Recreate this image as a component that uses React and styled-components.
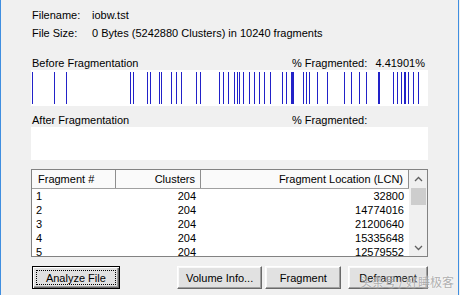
import React from "react";
import styled, { createGlobalStyle } from "styled-components";

const GlobalStyle = createGlobalStyle`
  html, body {
    margin: 0;
    padding: 0;
    background: #f0f0f0;
  }
  body {
    font-family: "Liberation Sans", Arial, sans-serif;
    font-size: 11px;
    color: #000;
  }
`;

// fragment map lines: [x from bar left, width]
const BEFORE = [
  [1, 1], [23, 1], [35, 1], [99, 1], [102, 1], [116, 1], [119, 1], [128, 1],
  [130, 1], [140, 1], [145, 1], [150, 1], [165, 1], [169, 1], [188, 1],
  [192, 1], [197, 1], [203, 1], [206, 1], [208, 1], [212, 1], [218, 1],
  [223, 1], [228, 1], [233, 1], [239, 1], [251, 1], [255, 1], [260, 3],
  [272, 1], [275, 1], [278, 1], [286, 1], [296, 1], [313, 1], [320, 1],
  [328, 1], [335, 1], [347, 2], [362, 1], [366, 1], [370, 1], [373, 2],
  [377, 1], [382, 1], [387, 1],
];

const ROWS = [
  [1, 204, 32800],
  [2, 204, 14774016],
  [3, 204, 21200640],
  [4, 204, 15335648],
  [5, 204, 12579552],
];

const Window = styled.div`
  position: relative;
  box-sizing: border-box;
  width: 459px;
  height: 295px;
  border-left: 1px solid #3f8ee0;
  border-right: 1px solid #3f8ee0;
  padding: 6px 30px 0 30px;
  overflow: hidden;
`;

const InfoRow = styled.div`
  display: flex;
  height: 18px;
  line-height: 18px;
  padding-left: 1px;
`;

const InfoLabel = styled.span`
  width: 60px;
`;

const SectionHead = styled.div`
  display: flex;
  height: 14px;
  line-height: 14px;
  margin-top: ${(p) => p.$gap}px;
  padding-left: 1px;
`;

const SectionTitle = styled.span`
  flex: 1;
`;

const FragStat = styled.span`
  display: flex;
  justify-content: space-between;
  width: 133px;
  padding-right: 3px;
`;

const MapBox = styled.div`
  background: #fff;
  height: ${(p) => p.$h}px;
`;

const ListBox = styled.div`
  display: flex;
  margin-top: 9px;
  height: 88px;
  box-sizing: border-box;
  border: 1px solid #828282;
  background: #fff;
`;

const ListBody = styled.div`
  flex: 1;
  overflow: hidden;
`;

const HeaderRow = styled.div`
  display: grid;
  grid-template-columns: 84px 85px 1fr;
  height: 18px;
  border-bottom: 1px solid #a0a0a0;
  background: #fafafa;
`;

const HeadCell = styled.div`
  padding: 3px 5px 0 6px;
  text-align: ${(p) => p.$align || "left"};
  border-right: 1px solid #8e8e8e;
  white-space: nowrap;
`;

const DataRow = styled.div`
  display: grid;
  grid-template-columns: 84px 85px 1fr;
  height: 14px;
  line-height: 14px;
`;

const Cell = styled.div`
  padding: 0 5px 0 4px;
  text-align: ${(p) => p.$align || "left"};
`;

const ScrollBar = styled.div`
  display: flex;
  flex-direction: column;
  width: 17px;
  background: #f0f0f0;
  border-left: 1px solid #f0f0f0;
`;

const Arrow = styled.div`
  height: 17px;
  display: flex;
  align-items: center;
  justify-content: center;
  color: #606060;
`;

const Thumb = styled.div`
  margin: 1px 1px 0 1px;
  height: 17px;
  background: #cdcdcd;
`;

const Track = styled.div`
  flex: 1;
`;

const ButtonRow = styled.div`
  display: flex;
  margin-top: 9px;
  padding-left: 1px;
`;

const Button = styled.div`
  box-sizing: border-box;
  width: ${(p) => p.$w}px;
  height: 23px;
  margin-left: ${(p) => p.$ml || 0}px;
  display: flex;
  align-items: center;
  justify-content: center;
  background: #e1e1e1;
  border: 1px solid;
  border-color: #fff #696969 #696969 #fff;
  box-shadow: inset -1px -1px 0 #a0a0a0, inset 1px 1px 0 #f8f8f8;
  ${(p) =>
    p.$default &&
    `
    border: 1px solid #000;
    box-shadow: inset 1px 1px 0 #fff, inset -1px -1px 0 #696969, inset -2px -2px 0 #a0a0a0;
  `}
`;

const FocusRect = styled.span`
  display: flex;
  align-items: center;
  justify-content: center;
  width: calc(100% - 8px);
  height: calc(100% - 8px);
  outline: 1px dotted #000;
`;

const Watermark = styled.div`
  position: absolute;
  right: 4px;
  bottom: 5px;
  font-family: "Noto Sans CJK SC", sans-serif;
  font-size: 12px;
  color: rgba(150, 150, 150, 0.75);
  text-shadow: 0 0 2px #fff;
`;

const FragMap = ({ lines }) => (
  <svg width="397" height="36" style={{ display: "block" }}>
    {lines.map(([x, w], i) => (
      <rect key={i} x={x} y={2} width={w} height={32} fill="#2222c8" />
    ))}
  </svg>
);

const Chevron = ({ up }) => (
  <svg width="9" height="6" viewBox="0 0 9 6">
    <path
      d={up ? "M1 5 L4.5 1.5 L8 5" : "M1 1 L4.5 4.5 L8 1"}
      fill="none"
      stroke="#606060"
      strokeWidth="1.3"
    />
  </svg>
);

export default function App() {
  return (
    <>
      <GlobalStyle />
      <Window>
        <InfoRow>
          <InfoLabel>Filename:</InfoLabel>
          <span>iobw.tst</span>
        </InfoRow>
        <InfoRow>
          <InfoLabel>File Size:</InfoLabel>
          <span>0 Bytes (5242880 Clusters) in 10240 fragments</span>
        </InfoRow>

        <SectionHead $gap={14}>
          <SectionTitle>Before Fragmentation</SectionTitle>
          <FragStat>
            <span>% Fragmented:</span>
            <span>4.41901%</span>
          </FragStat>
        </SectionHead>
        <MapBox $h={36}>
          <FragMap lines={BEFORE} />
        </MapBox>

        <SectionHead $gap={7}>
          <SectionTitle>After Fragmentation</SectionTitle>
          <FragStat>
            <span>% Fragmented:</span>
          </FragStat>
        </SectionHead>
        <MapBox $h={33} />

        <ListBox>
          <ListBody>
            <HeaderRow>
              <HeadCell>Fragment #</HeadCell>
              <HeadCell $align="right">Clusters</HeadCell>
              <HeadCell $align="right">Fragment Location (LCN)</HeadCell>
            </HeaderRow>
            {ROWS.map(([n, c, lcn]) => (
              <DataRow key={n}>
                <Cell>{n}</Cell>
                <Cell $align="right">{c}</Cell>
                <Cell $align="right">{lcn}</Cell>
              </DataRow>
            ))}
          </ListBody>
          <ScrollBar>
            <Arrow>
              <Chevron up />
            </Arrow>
            <Thumb />
            <Track />
            <Arrow>
              <Chevron />
            </Arrow>
          </ScrollBar>
        </ListBox>

        <ButtonRow>
          <Button $w={88} $default>
            <FocusRect>Analyze File</FocusRect>
          </Button>
          <Button $w={86} $ml={57}>Volume Info...</Button>
          <Button $w={76} $ml={3}>Fragment</Button>
          <Button $w={80} $ml={7}>Defragment</Button>
        </ButtonRow>

        <Watermark>头条号 / 好睡极客</Watermark>
      </Window>
    </>
  );
}
